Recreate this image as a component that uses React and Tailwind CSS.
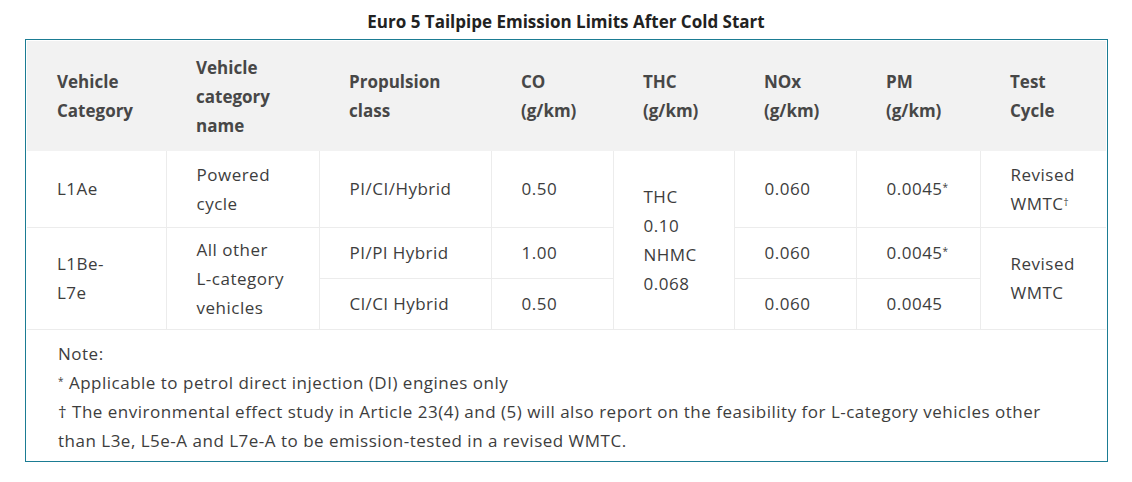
const FONT = { fontFamily: "'Open Sans', Lato, sans-serif" };

const th = "text-left align-middle pl-[30px] pr-3 font-bold tracking-normal";
const td = "text-left align-middle pl-[30px] pr-2 border-[#ececec]";

function Sup({ children }) {
  return <sup className="text-[10px] relative -top-[4px]">{children}</sup>;
}

export default function App() {
  return (
    <div className="w-[1132px] h-[482px] bg-white text-[#3d3d3d] text-[17px] leading-[29px] tracking-[0.5px]" style={FONT}>
      <h3 className="text-center font-bold text-[17px] text-[#222] pt-[9px] h-[39px] leading-[26px] tracking-normal">
        Euro 5 Tailpipe Emission Limits After Cold Start
      </h3>
      <div className="ml-[25px] w-[1083px] h-[423px] p-px border border-[#1b7c93]">
        <table className="border-collapse table-fixed w-[1079px]">
          <colgroup>
            <col className="w-[139px]" />
            <col className="w-[153px]" />
            <col className="w-[172px]" />
            <col className="w-[122px]" />
            <col className="w-[121px]" />
            <col className="w-[122px]" />
            <col className="w-[124px]" />
            <col className="w-[126px]" />
          </colgroup>
          <thead>
            <tr className="h-[110px] bg-[#f2f2f2] text-[#474747]">
              <th className={th}>Vehicle<br />Category</th>
              <th className={th}>Vehicle<br />category<br />name</th>
              <th className={th}>Propulsion<br />class</th>
              <th className={th}>CO<br />(g/km)</th>
              <th className={th}>THC<br />(g/km)</th>
              <th className={th}>NOx<br />(g/km)</th>
              <th className={th}>PM<br />(g/km)</th>
              <th className={th}>Test<br />Cycle</th>
            </tr>
          </thead>
          <tbody>
            <tr className="h-[76px] border-b border-[#ececec]">
              <td className={td + " border-r"}>L1Ae</td>
              <td className={td + " border-r"}>Powered<br />cycle</td>
              <td className={td + " border-r"}>PI/CI/Hybrid</td>
              <td className={td + " border-r"}>0.50</td>
              <td rowSpan={3} className={td + " border-r"}>THC<br />0.10<br />NHMC<br />0.068</td>
              <td className={td + " border-r"}>0.060</td>
              <td className={td + " border-r"}>0.0045<Sup>*</Sup></td>
              <td className={td}>Revised<br />WMTC<Sup>†</Sup></td>
            </tr>
            <tr className="h-[51px] border-b border-[#ececec]">
              <td rowSpan={2} className={td + " border-r"}>L1Be-<br />L7e</td>
              <td rowSpan={2} className={td + " border-r"}>All other<br />L-category<br />vehicles</td>
              <td className={td + " border-r"}>PI/Pl Hybrid</td>
              <td className={td + " border-r"}>1.00</td>
              <td className={td + " border-r"}>0.060</td>
              <td className={td + " border-r"}>0.0045<Sup>*</Sup></td>
              <td rowSpan={2} className={td}>Revised<br />WMTC</td>
            </tr>
            <tr className="h-[51px] border-b border-[#ececec]">
              <td className={td + " border-r"}>Cl/Cl Hybrid</td>
              <td className={td + " border-r"}>0.50</td>
              <td className={td + " border-r"}>0.060</td>
              <td className={td + " border-r"}>0.0045</td>
            </tr>
          </tbody>
        </table>
        <div className="pl-[31px] pt-[9px]">
          <p>Note:</p>
          <p><Sup>*</Sup> Applicable to petrol direct injection (DI) engines only</p>
          <p>
            † The environmental effect study in Article 23(4) and (5) will also report on the feasibility for L-category vehicles other
            <br />
            than L3e, L5e-A and L7e-A to be emission-tested in a revised WMTC.
          </p>
        </div>
      </div>
    </div>
  );
}
